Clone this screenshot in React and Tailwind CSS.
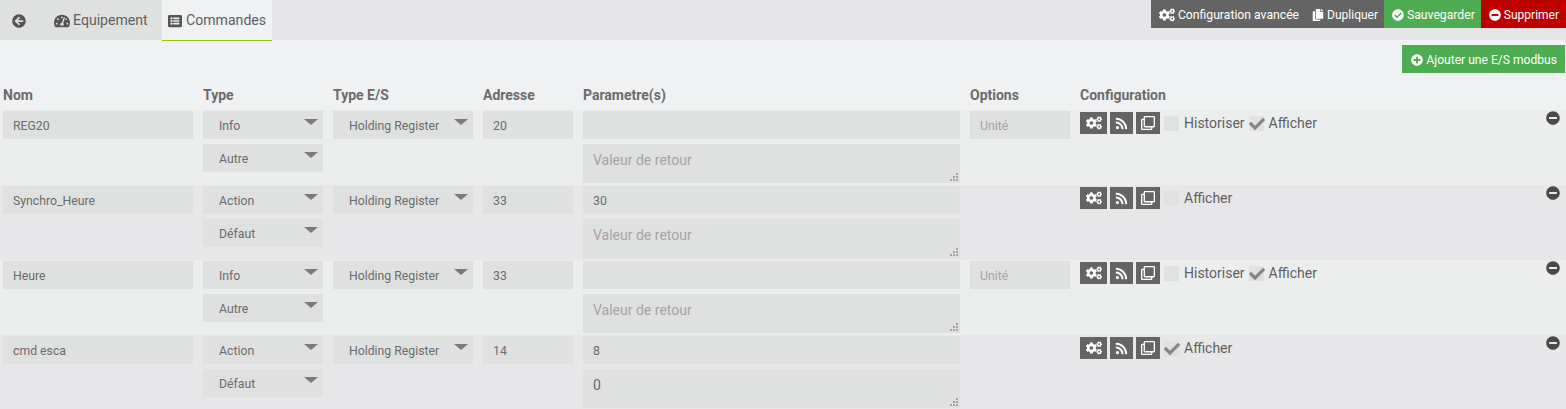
import React from "react";
import { FaArrowCircleLeft, FaTachometerAlt, FaListAlt, FaCogs, FaCopy, FaCheckCircle, FaMinusCircle, FaPlusCircle, FaRss, FaRegClone, FaCheck } from "react-icons/fa";

const rows = [
  { nom: "REG20", type: "Info", sub: "Autre", addr: "20", param: "", ret: "", unit: true, hist: true, aff: true, bg: "bg-[#eceeee]" },
  { nom: "Synchro_Heure", type: "Action", sub: "Défaut", addr: "33", param: "30", ret: "", unit: false, hist: false, aff: false, bg: "bg-[#e7e7e9]" },
  { nom: "Heure", type: "Info", sub: "Autre", addr: "33", param: "", ret: "", unit: true, hist: true, aff: true, bg: "bg-[#eceeee]" },
  { nom: "cmd esca", type: "Action", sub: "Défaut", addr: "14", param: "8", ret: "0", unit: false, hist: false, aff: true, bg: "bg-[#e7e7e9]" },
];

const fieldCls = "block w-full h-7 bg-[#dfe1e0] text-[#6b6b6b] text-[12.25px] outline-none placeholder:text-[#a6a3a3]";

function Sel({ value, opts }) {
  return (
    <div className="relative">
      <select defaultValue={value} className={`${fieldCls} pt-[2px] appearance-none pl-4`}>
        {opts.map((o) => <option key={o}>{o}</option>)}
      </select>
      <svg className="absolute right-[5px] top-2 pointer-events-none" width="14" height="6" viewBox="0 0 14 6"><path d="M0 0h14L7 6z" fill="#7a7a7a" /></svg>
    </div>
  );
}

function Grip() {
  return (
    <svg className="absolute right-[2px] bottom-[2px] pointer-events-none" width="8" height="8" viewBox="0 0 8 8" fill="#a3a3a3">
      <rect x="6" y="0" width="2" height="2" />
      <rect x="3" y="3" width="2" height="2" />
      <rect x="6" y="3" width="2" height="2" />
      <rect x="0" y="6" width="2" height="2" />
      <rect x="3" y="6" width="2" height="2" />
      <rect x="6" y="6" width="2" height="2" />
    </svg>
  );
}

function Check({ on, label }) {
  return (
    <span className="flex items-center">
      <span className="relative w-[15px] h-[15px] bg-[#e0e2e1] mr-[5px] shrink-0">
        {on && <FaCheck className="absolute top-0 left-0 text-[#85858b]" size={16} />}
      </span>
      <span className="text-sm text-[#5f5f62] leading-5">{label}</span>
    </span>
  );
}

function IconBtn({ w, children }) {
  return <span className={`flex items-center justify-center h-[22px] bg-[#646464] text-white ${w}`}>{children}</span>;
}

function Row({ r }) {
  return (
    <div className={`flex h-[75px] pt-px ${r.bg}`}>
      <div className="w-[190px] ml-[3px] shrink-0">
        <input readOnly defaultValue={r.nom} className={`${fieldCls} pt-px pl-[10px]`} />
      </div>
      <div className="w-[120px] ml-[10px] shrink-0 flex flex-col gap-[5px]">
        <Sel value={r.type} opts={["Info", "Action"]} />
        <Sel value={r.sub} opts={["Autre", "Défaut"]} />
      </div>
      <div className="w-[140px] ml-[10px] shrink-0">
        <Sel value="Holding Register" opts={["Holding Register"]} />
      </div>
      <div className="w-[90px] ml-[10px] shrink-0">
        <input readOnly defaultValue={r.addr} className={`${fieldCls} pt-px pl-[10px]`} />
      </div>
      <div className="w-[377px] ml-[10px] shrink-0 flex flex-col gap-[5px]">
        <input readOnly defaultValue={r.param} className={`${fieldCls} pt-px pl-[10px]`} />
        <div className="relative">
          <textarea readOnly defaultValue={r.ret} placeholder="Valeur de retour" className="block w-full h-[39px] resize-none bg-[#dfe1e0] text-[#6b6b6b] text-sm leading-5 px-[10px] py-[6px] outline-none placeholder:text-[#a6a3a3]" />
          <Grip />
        </div>
      </div>
      <div className="w-[100px] ml-[10px] shrink-0">
        {r.unit && <input readOnly placeholder="Unité" className={`${fieldCls} pt-px pl-[10px]`} />}
      </div>
      <div className="ml-[10px] flex-1 flex items-start">
        <div className="flex items-center mt-px">
          <IconBtn w="w-[27px]"><FaCogs size={16} /></IconBtn>
          <span className="w-[3px]" />
          <IconBtn w="w-[23px]"><FaRss size={13} /></IconBtn>
          <span className="w-[3px]" />
          <IconBtn w="w-[24px]"><FaRegClone size={14} /></IconBtn>
          <span className="w-1" />
          {r.hist && <Check on={false} label="Historiser" />}
          {r.hist && <span className="w-1" />}
          <Check on={r.aff} label="Afficher" />
        </div>
        <FaMinusCircle className="ml-auto mr-[6px] text-[#4a4a4a]" size={14} />
      </div>
    </div>
  );
}

function HeadCell({ w, ml, children }) {
  return <div className={`${w} ${ml} shrink-0 text-sm font-bold text-[#6b6b6b] leading-5`}>{children}</div>;
}

export default function App() {
  return (
    <div className="w-[1566px] h-[409px] overflow-hidden bg-[#eff1f3] font-['Roboto',sans-serif]">
      <div className="flex h-10 bg-[#e6e6e8]">
        <div className="flex h-10 pt-[2px] w-[162px] bg-[#dfe1e0] text-[14.1px] text-[#5f5f62]">
          <span className="flex items-center pl-3 w-[54px]"><FaArrowCircleLeft size={14} className="text-[#555]" /></span>
          <span className="flex items-center gap-[3px]"><FaTachometerAlt size={16} className="text-[#555]" />Equipement</span>
        </div>
        <div className="flex items-center gap-1 h-[41px] w-[110px] pl-[6px] pt-[2px] bg-[#eff1f3] border-b border-[#93ca02] text-[14.1px] text-[#5f5f62]">
          <FaListAlt size={14} className="text-[#555]" />Commandes
        </div>
        <div className="ml-auto flex h-7 text-white">
          <span className="flex items-center gap-[3px] pl-2 pr-[6px] pt-[2px] bg-[#646464] text-[12.2px]"><FaCogs size={16} />Configuration avancée</span>
          <span className="flex items-center gap-[3px] pl-[7px] pr-[6px] pt-[2px] bg-[#646464] text-xs"><FaCopy size={12} />Dupliquer</span>
          <span className="flex items-center gap-[3px] pl-2 pr-[6px] pt-[2px] bg-[#4eac53] text-[12.2px]"><FaCheckCircle size={12} />Sauvegarder</span>
          <span className="flex items-center gap-[3px] pl-2 pr-[7px] pt-[2px] bg-[#bf0000] text-xs"><FaMinusCircle size={12} />Supprimer</span>
        </div>
      </div>
      <div className="flex justify-end pt-[5px] pr-px">
        <span className="flex items-center gap-[3px] h-7 pl-[9px] pr-2 pt-[2px] bg-[#4eac53] text-white text-[12.1px]"><FaPlusCircle size={12} />Ajouter une E/S modbus</span>
      </div>
      <div className="flex h-[37px] pt-[12px]">
        <HeadCell w="w-[190px]" ml="ml-[3px]">Nom</HeadCell>
        <HeadCell w="w-[120px]" ml="ml-[10px]">Type</HeadCell>
        <HeadCell w="w-[140px]" ml="ml-[10px]">Type E/S</HeadCell>
        <HeadCell w="w-[90px]" ml="ml-[10px]">Adresse</HeadCell>
        <HeadCell w="w-[377px]" ml="ml-[10px]">Parametre(s)</HeadCell>
        <HeadCell w="w-[100px]" ml="ml-[10px]">Options</HeadCell>
        <HeadCell w="w-[100px]" ml="ml-[10px]">Configuration</HeadCell>
      </div>
      {rows.map((r) => <Row key={r.nom} r={r} />)}
    </div>
  );
}
